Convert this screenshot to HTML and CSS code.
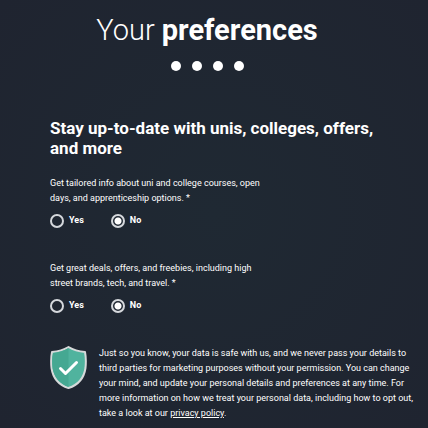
FILE: index.html
```html
<!doctype html>
<html lang="en">
    <head>
        <meta charset="utf-8">
        <meta name="viewport" content="width=device-width, initial-scale=1.0">
        <title>Your preferences</title>
        <link rel="stylesheet" href="styles.css">
    </head>
    <body>
        <header>
            <h1>Your <strong>preferences</strong></h1>
            <div class="steps">
                <span></span>
                <span></span>
                <span></span>
                <span></span>
            </div>
        </header>

        <form class="preferences">
            <h2>Stay up-to-date with unis, colleges, offers, and more</h2>

            <fieldset>
                <legend>Get tailored info about uni and college courses, open days, and apprenticeship options. *</legend>
                <div class="options">
                    <label><input type="radio" name="courses" value="yes">Yes</label>
                    <label><input type="radio" name="courses" value="no" checked>No</label>
                </div>
            </fieldset>

            <fieldset>
                <legend>Get great deals, offers, and freebies, including high street brands, tech, and travel. *</legend>
                <div class="options">
                    <label><input type="radio" name="deals" value="yes">Yes</label>
                    <label><input type="radio" name="deals" value="no" checked>No</label>
                </div>
            </fieldset>

            <div class="privacy">
                <svg class="shield" viewBox="0 0 37 43" width="37" height="43" aria-hidden="true">
                    <path fill="#50b39e" stroke="#d6d9da" stroke-width="2" stroke-linejoin="round" d="M18.500 1C13.500 4 7.500 5.500 2 6C1 11 1 17 1.500 22C3 32 9 39 18.500 42C28 39 34 32 35.500 22C36 17 36 11 35 6C29.500 5.500 23.500 4 18.500 1Z"/>
                    <path fill="#45a892" d="M18.500 2C13.500 5 8 6.500 3 7C2 11 2 17 2.500 22C4 31 10 38 18.500 41Z"/>
                    <path fill="none" stroke="#fff" stroke-width="3" stroke-linecap="round" stroke-linejoin="round" d="M10.500 22.500L15.500 27.500L26.500 16.500"/>
                </svg>
                <p>Just so you know, your data is safe with us, and we never pass your details to third parties for marketing purposes without your permission. You can change your mind, and update your personal details and preferences at any time. For more information on how we treat your personal data, including how to opt out, take a look at our <a href="#">privacy policy</a>.</p>
            </div>
        </form>
    </body>
</html>
```

FILE: styles.css
```css
body {
    margin: 0;
    padding: 12px 8px 5px 50px;
    font-family: Roboto, sans-serif;
    font-size: 9px;
    line-height: 15px;
    background: #1f2732 radial-gradient(circle, #1f2933, #1f2430);
    color: #fff;
}

header {
    padding-right: 56px;
    text-align: center;
}
h1 {
    margin: 0 0 13px;
    font-size: 29px;
    font-weight: 300;
    line-height: 36px;
}
h1 strong {
    font-weight: 700;
}
.steps {
    display: flex;
    justify-content: center;
    gap: 11px;
}
.steps span {
    width: 10px;
    height: 10px;
    border-radius: 50%;
    background: #fff;
}

h2 {
    max-width: 350px;
    margin: 47px 0 18px;
    font-size: 17px;
    font-weight: 700;
    line-height: 20px;
}

fieldset {
    margin: 0 0 33px;
    padding: 0;
    border: 0;
}
legend {
    max-width: 216px;
    padding: 0;
}
.options {
    display: flex;
    gap: 27px;
    padding-top: 7px;
}
.options label {
    display: flex;
    align-items: center;
    font-weight: 700;
}
input[type="radio"] {
    appearance: none;
    width: 14px;
    height: 14px;
    margin: 0 5px 0 0;
    border: solid 2px #d5d8dc;
    border-radius: 50%;
}
input[type="radio"]:checked {
    background: radial-gradient(circle, #fff 3px, transparent 4px);
}

.privacy {
    display: flex;
    align-items: flex-start;
    gap: 12px;
}
.shield {
    flex: none;
}
.privacy p {
    max-width: 320px;
    margin: 0;
}
.privacy a {
    color: inherit;
}
```
